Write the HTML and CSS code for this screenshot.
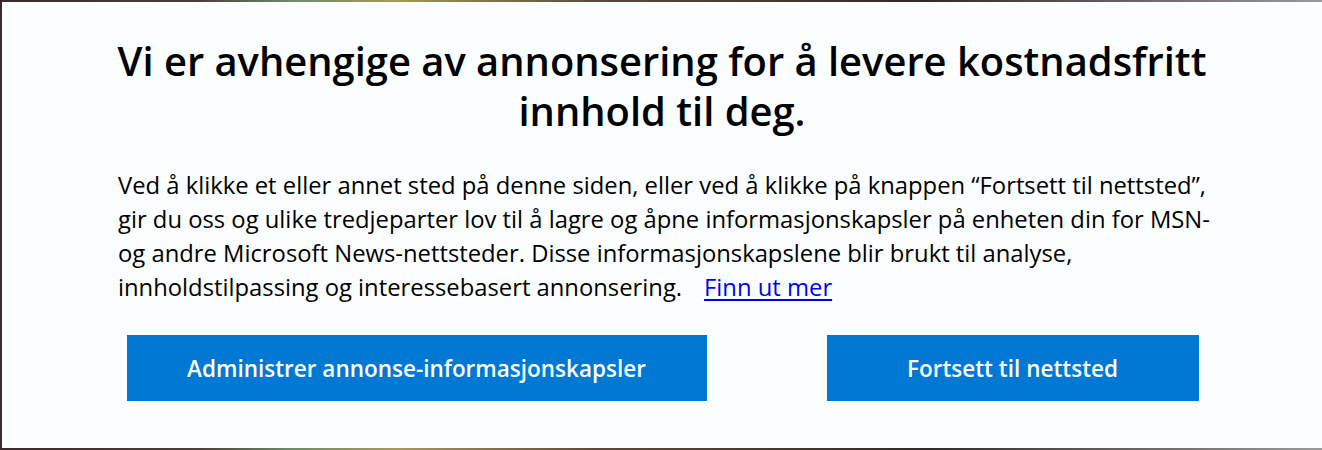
FILE: index.html
```html
<!DOCTYPE html>
<html lang="no">
<head>
<meta charset="utf-8">
<link rel="stylesheet" href="styles.css">
</head>
<body>
<div class="backdrop">
  <div class="panel">
    <h1 class="title">Vi er avhengige av annonsering for å levere kostnadsfritt innhold til deg.</h1>
    <p class="text">Ved å klikke et eller annet sted på denne siden, eller ved å klikke på knappen “Fortsett til nettsted”, gir du oss og ulike tredjeparter lov til å lagre og åpne informasjonskapsler på enheten din for MSN- og andre Microsoft News-nettsteder. Disse informasjonskapslene blir brukt til analyse, innholdstilpassing og interessebasert annonsering.<a class="link" href="#">Finn ut mer</a></p>
    <div class="actions">
      <button class="btn btn-manage">Administrer annonse-informasjonskapsler</button>
      <button class="btn btn-continue">Fortsett til nettsted</button>
    </div>
  </div>
</div>
</body>
</html>
```
FILE: styles.css
```css
* { box-sizing: border-box; }
html, body { margin: 0; padding: 0; }
body {
  width: 1322px;
  height: 450px;
  overflow: hidden;
  font-family: "Open Sans", "Noto Sans", sans-serif;
}
.backdrop {
  height: 450px;
  padding: 2px 0 2px 2px;
  background: linear-gradient(90deg, #3a2a2c 0%, #4a3f3a 15%, #6f8a6a 22%, #a49a5a 30%, #5b4a3a 45%, #2f2b28 70%, #9a9a9a 100%);
}
.panel {
  height: 446px;
  background: #fafeff;
  padding: 34px 0 0 0;
  display: flex;
  flex-direction: column;
  align-items: center;
}
.title {
  margin: 0;
  width: 1140px;
  text-align: center;
  font-size: 39.9px;
  font-weight: 600;
  line-height: 50px;
  color: #000;
}
.text {
  align-self: flex-start;
  margin: 32px 0 0 116px;
  width: 1106px;
  font-size: 23.8px;
  line-height: 34px;
  color: #000;
}
.link {
  display: inline-block;
  margin-left: 22px;
  line-height: 30px;
  color: #0000ee;
  text-decoration: underline;
  text-underline-offset: 3px;
}
.actions {
  margin-top: 31px;
  display: flex;
  gap: 120px;
  padding-left: 1px;
}
.btn {
  height: 66px;
  border: 0;
  border-radius: 0;
  background: #0078d4;
  color: #fff;
  font-family: "Open Sans", "Noto Sans", sans-serif;
  font-size: 22.5px;
  font-weight: 600;
  cursor: pointer;
}
.btn-manage { width: 580px; }
.btn-continue { width: 372px; }
```
